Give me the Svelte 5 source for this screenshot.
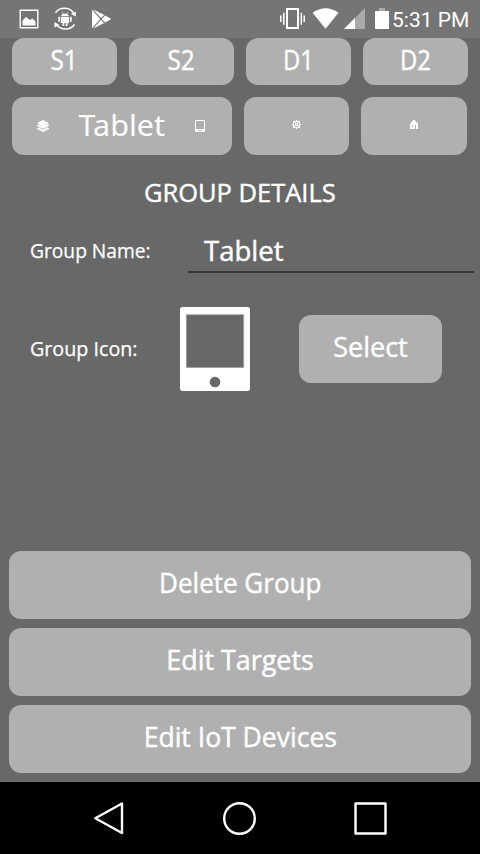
<script>
  const slots = [
    { name: 'S1', sx: 0.9 },
    { name: 'S2', sx: 0.9 },
    { name: 'D1', sx: 0.88 },
    { name: 'D2', sx: 0.88 }
  ];
  const actions = [
    { name: 'Delete Group', sx: 0.963 },
    { name: 'Edit Targets', sx: 0.995 },
    { name: 'Edit IoT Devices', sx: 0.983 }
  ];
</script>

<div class="screen">
  <header class="status">
    <svg class="notices" width="100" height="38" viewBox="0 0 100 38">
      <path fill="none" stroke="#fff" stroke-width="1.4" d="M8.2 10.2h17.6v17.6H8.2z" />
      <path fill="#fff" d="M10.5 25.5v-5l3.5-3.5 4 3 2.5-1.5 3 3v4z" />
      <path fill="none" stroke="#fff" stroke-width="1.5" d="M43.5 12.8c4-6 14-6 18 .2M62.5 24.5c-4 6-14 6-18-.2" />
      <path fill="#fff" d="M63.8 11.5v5l-5-2.5zM42.5 27.5v-5.5l5 3z" />
      <path fill="#fff" d="M48.8 16.2a4.4 3.7 0 0 1 8.4 0zM48.8 16.9h8.4v6h-1.7v3h-1.8v-3h-1.4v3h-1.8v-3h-1.7zM46.3 16.8h1.6v5h-1.6zM58.1 16.8h1.6v5h-1.6z" />
      <path stroke="#fff" stroke-width=".7" d="m50.2 12 1 2m4.6-2-1 2" />
      <path fill="#fff" d="M80 9.8v18.4L88.2 19zM81.2 9.5 88.9 18l3.4-3.1zM81.2 28.5l7.7-8.5 3.4 3.1zM93.1 15.5 98.5 18.4q1 .6 0 1.2l-5.4 2.9L89.7 19z" />
    </svg>
    <svg class="signals" width="111" height="38" viewBox="279 0 111 38">
      <path fill="none" stroke="#fff" stroke-width="2" d="M287 9h11v19h-11z" />
      <path stroke="#fff" stroke-width="1.5" d="M283.8 12.8v12M301.3 12.8v12M280.8 15.5v6.5M304.2 15.5v6.5" />
      <path fill="#fff" d="M312.5 12.8Q325.6 3.6 338.5 12.8L325.6 28.8z" />
      <path fill="#aaa" d="M365 8v21h-21z" />
      <path fill="#fff" d="M355 18v11h-11z" />
      <path fill="#aaa" d="M379 8h6v3h-6z" />
      <path fill="#fff" d="M375 11h14v18h-14z" />
    </svg>
    <span class="clock">5:31 PM</span>
  </header>

  <nav class="slots">
    {#each slots as slot}
      <button><span style:--sx={slot.sx}>{slot.name}</span></button>
    {/each}
  </nav>

  <nav class="tools">
    <button class="current">
      <svg width="12" height="12" viewBox="0 0 12 12" fill="#fff">
        <path d="m6 0 6 3-6 3.2L0 3z" />
        <path d="m0 5 1.8-.8L6 6.6l4.2-2.4L12 5v.8L6 8.8 0 5.8zM0 8.3l1.8-1L6 9.8l4.2-2.5 1.8 1v.6L6 12 0 8.9z" />
      </svg>
      <span class="title">Tablet</span>
      <svg width="10" height="12" viewBox="0 0 10 12">
        <path fill="#fff" fill-rule="evenodd" d="M0 0h10v12H0zM1 1v8h8V1zM4 10v1h2v-1z" />
      </svg>
    </button>
    <button class="settings" aria-label="Settings">
      <svg width="9" height="9" viewBox="0 0 9 9" shape-rendering="crispEdges">
        <path fill="#fff" fill-rule="evenodd" d="M1 1h3V0h1v1h3v3h1v1H8v3H5v1H4V8H1V5H0V4h1zM3 2v1H2v3h1v1h3V6h1V3H6V2z" />
        <path fill="#fff" fill-rule="evenodd" d="M3 3h3v3H3zM4 4v1h1V4z" />
      </svg>
    </button>
    <button class="home" aria-label="Home">
      <svg width="8" height="9" viewBox="0 0 8 9" shape-rendering="crispEdges">
        <path fill="#fff" fill-rule="evenodd" d="M3 0h2v1h1v1h1v1h1v6H6V5H5v4H0V4h1V2h1V1h1zM2 5v2h1V5z" />
      </svg>
    </button>
  </nav>

  <h1><span>GROUP DETAILS</span></h1>

  <main>
    <div class="row name">
      <label for="group-name"><span>Group Name:</span></label>
      <div class="field" id="group-name"><span>Tablet</span></div>
    </div>
    <div class="row icon">
      <div class="caption"><span>Group Icon:</span></div>
      <svg width="70" height="84" viewBox="0 0 70 84">
        <rect width="70" height="84" rx="2.5" fill="#fff" />
        <path fill="#686868" stroke="#999" stroke-width=".8" d="M6.4 7.8h57.2v52.6H6.4z" />
        <circle cx="35" cy="75" r="5.3" fill="#686868" />
      </svg>
      <button class="select"><span>Select</span></button>
    </div>
  </main>

  <section class="actions">
    {#each actions as action}
      <button><span style:--sx={action.sx}>{action.name}</span></button>
    {/each}
  </section>

  <footer>
    <svg width="480" height="72" viewBox="0 0 480 72" fill="none" stroke="#fff" stroke-width="2.4" stroke-linejoin="round">
      <path d="M122 21.5v29.5L95.3 36.3z" />
      <circle cx="239.5" cy="36.5" r="15.3" />
      <path d="M355.5 21.5h30v30h-30z" />
    </svg>
  </footer>
</div>

<style>
  :global(body) {
    margin: 0;
  }
  .screen {
    width: 480px;
    height: 854px;
    display: flex;
    flex-direction: column;
    overflow: hidden;
    background: #686868;
    color: #fff;
    font-family: 'Open Sans', 'Noto Sans', sans-serif;
    font-weight: 500;
    -webkit-text-stroke: 0.45px #fff;
  }
  .status {
    height: 38px;
    flex: none;
    display: flex;
    align-items: center;
    background: #757575;
  }
  .notices {
    margin-left: 12px;
  }
  .signals {
    margin-left: 167px;
  }
  .clock {
    margin-left: 2px;
    padding-top: 1px;
    white-space: nowrap;
    font: 400 21px Roboto, sans-serif;
    -webkit-text-stroke: 0;
  }
  button {
    box-sizing: border-box;
    margin: 0;
    padding: 0 0 5px;
    border: 0;
    border-radius: 12px;
    background: #b0b0b0;
    color: inherit;
    font: inherit;
    font-size: 27px;
    line-height: 36px;
    display: flex;
    align-items: center;
    justify-content: center;
    white-space: nowrap;
  }
  span {
    display: block;
    white-space: nowrap;
  }
  button span {
    transform: scaleX(var(--sx, 1));
  }
  .slots,
  .tools {
    display: flex;
    flex: none;
    gap: 12px;
    padding: 0 12px;
  }
  .slots button {
    width: 105px;
    height: 47px;
    padding-bottom: 4px;
  }
  .tools {
    margin-top: 12px;
  }
  .tools button {
    width: 105px;
    height: 58px;
    padding: 0 0 3px;
  }
  .tools .current {
    width: 220px;
    justify-content: space-between;
    padding: 0 27px 0 25px;
  }
  .tools .home {
    width: 106px;
  }
  .tools .title {
    font: 400 29.5px 'Noto Sans', sans-serif;
    padding-bottom: 3px;
    -webkit-text-stroke: 0;
    --sx: 1.035;
  }
  h1 {
    margin: 19px 0 0;
    height: 36px;
    flex: none;
    display: flex;
    justify-content: center;
    font-size: 26px;
    font-weight: 500;
    line-height: 36px;
  }
  h1 span {
    transform: scaleX(0.98);
  }
  main {
    flex: none;
  }
  .row {
    display: flex;
    align-items: center;
    padding-left: 30px;
    font-size: 20px;
    -webkit-text-stroke-width: 0.25px;
  }
  .row.name {
    height: 63px;
    align-items: flex-start;
  }
  label,
  .caption {
    width: 150px;
    line-height: 28px;
  }
  label {
    width: 158px;
    margin-top: 27px;
  }
  label span {
    transform: scaleX(0.96);
    transform-origin: left;
  }
  .caption span {
    transform: scaleX(0.985);
    transform-origin: left;
  }
  .field {
    box-sizing: border-box;
    width: 286px;
    height: 63px;
    padding: 23px 0 0 16px;
    font-size: 27px;
    line-height: 36px;
    -webkit-text-stroke-width: 0.45px;
    border-bottom: 2px solid #383838;
  }
  .field span {
    transform: scaleX(1.02);
    transform-origin: left;
  }
  .row.icon {
    margin-top: 34px;
    height: 84px;
  }
  .select {
    width: 143px;
    height: 68px;
    margin-left: 49px;
    -webkit-text-stroke-width: 0.45px;
  }
  .actions {
    margin-top: auto;
    display: flex;
    flex-direction: column;
    gap: 9px;
    padding: 0 9px 9px;
  }
  .actions button {
    height: 68px;
  }
  footer {
    height: 72px;
    flex: none;
    background: #000;
  }
  footer svg {
    display: block;
  }
</style>
